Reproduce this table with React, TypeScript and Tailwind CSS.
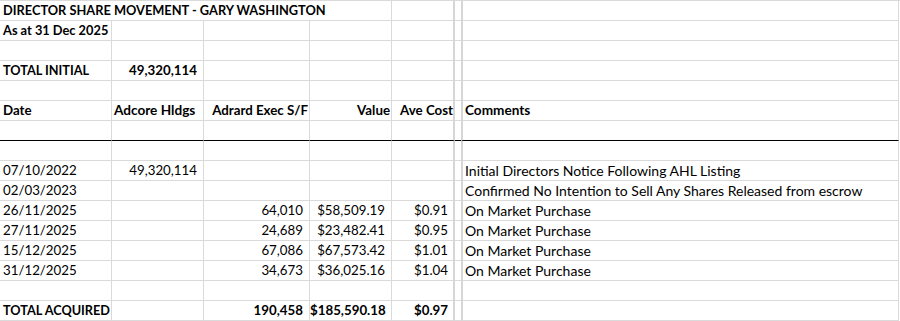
type Row = {
  cells: string[];
  bold?: boolean;
  title?: boolean;
  heavy?: boolean;
  header?: boolean;
  labelSize?: string;
};

const rows: Row[] = [
  {
    cells: ["DIRECTOR SHARE MOVEMENT - GARY WASHINGTON", "", "", "", "", ""],
    bold: true,
    title: true,
    labelSize: "text-[12.8px]",
  },
  { cells: ["As at 31 Dec 2025", "", "", "", "", ""], bold: true, labelSize: "text-[12.8px]" },
  { cells: ["", "", "", "", "", ""] },
  { cells: ["TOTAL INITIAL", "49,320,114", "", "", "", ""], bold: true, labelSize: "text-[12.7px]" },
  { cells: ["", "", "", "", "", ""] },
  { cells: ["Date", "Adcore Hldgs", "Adrard Exec S/F", "Value", "Ave Cost", "Comments"], bold: true, header: true },
  { cells: ["", "", "", "", "", ""], heavy: true },
  { cells: ["", "", "", "", "", ""] },
  { cells: ["07/10/2022", "49,320,114", "", "", "", "Initial Directors Notice Following AHL Listing"] },
  { cells: ["02/03/2023", "", "", "", "", "Confirmed No Intention to Sell Any Shares Released from escrow"] },
  { cells: ["26/11/2025", "", "64,010", "$58,509.19", "$0.91", "On Market Purchase"] },
  { cells: ["27/11/2025", "", "24,689", "$23,482.41", "$0.95", "On Market Purchase"] },
  { cells: ["15/12/2025", "", "67,086", "$67,573.42", "$1.01", "On Market Purchase"] },
  { cells: ["31/12/2025", "", "34,673", "$36,025.16", "$1.04", "On Market Purchase"] },
  { cells: ["", "", "", "", "", ""] },
  { cells: ["TOTAL ACQUIRED", "", "190,458", "$185,590.18", "$0.97", ""], bold: true, labelSize: "text-[12.7px]" },
];

function SheetRow({ row }: { row: Row }) {
  const [a, b, c, d, e, f] = row.cells;
  const line = row.heavy ? "border-b-black" : "border-b-[#dadada]";
  const base = `h-[20px] border-b ${line} leading-[19px] whitespace-nowrap overflow-visible`;
  const weight = row.bold ? "font-bold" : "font-normal";
  const numPad = row.header ? "pr-[1px]" : "pr-[6px]";
  const labelSize = row.labelSize ?? "text-[13.3px]";
  const noteSize = row.header ? "text-[13.6px]" : "text-[14px]";

  return (
    <div className={`contents ${weight}`}>
      {row.title ? (
        <div className={`${base} col-span-4 border-r border-r-[#dadada] pl-[3px] ${labelSize}`}>{a}</div>
      ) : (
        <>
          <div className={`${base} border-r border-r-[#dadada] pl-[3px] ${labelSize}`}>{a}</div>
          <div
            className={`${base} border-r border-r-[#dadada] ${
              row.header ? "pl-[2px] text-left text-[13.6px]" : "pr-[6px] text-right"
            }`}
          >
            {b}
          </div>
          <div className={`${base} border-r border-r-[#dadada] text-right ${numPad}`}>{c}</div>
          <div className={`${base} border-r border-r-[#dadada] text-right ${numPad}`}>{d}</div>
        </>
      )}
      <div
        className={`${base} border-r-2 border-r-[#d6d6d6] text-right ${
          row.header ? "pr-0" : "pr-[5px]"
        }`}
      >
        {row.title ? "" : e}
      </div>
      <div className={`${base}`} />
      <div
        className={`${base} border-l-2 border-l-[#d6d6d6] border-r border-r-[#dadada] pl-[2px] ${noteSize}`}
      >
        {f}
      </div>
    </div>
  );
}

export default function App() {
  return (
    <div className="h-[321px] w-[900px] overflow-hidden bg-white">
      <div
        className="grid grid-cols-[112px_92px_106px_82px_63px_6px_438px] border-t border-t-[#dadada] text-[13.3px] text-black"
        style={{ fontFamily: "Lato, 'Open Sans', sans-serif" }}
      >
        {rows.map((row, i) => (
          <SheetRow key={i} row={row} />
        ))}
      </div>
    </div>
  );
}
